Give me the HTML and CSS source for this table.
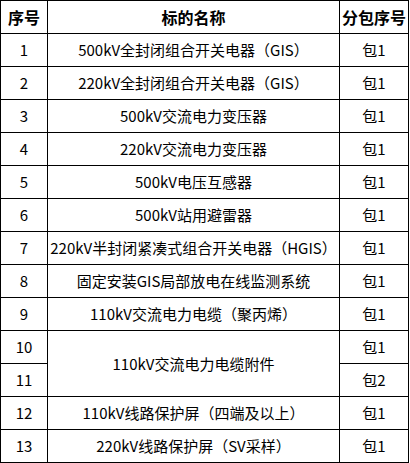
FILE: index.html
```html
<!DOCTYPE html>
<html lang="zh">
<head>
<meta charset="utf-8">
<link rel="stylesheet" href="styles.css">
</head>
<body>
<table class="bid-table">
  <colgroup>
    <col class="c-no">
    <col class="c-name">
    <col class="c-pkg">
  </colgroup>
  <thead>
    <tr><th>序号</th><th>标的名称</th><th>分包序号</th></tr>
  </thead>
  <tbody>
    <tr><td>1</td><td>500kV全封闭组合开关电器（GIS）</td><td>包1</td></tr>
    <tr><td>2</td><td>220kV全封闭组合开关电器（GIS）</td><td>包1</td></tr>
    <tr><td>3</td><td>500kV交流电力变压器</td><td>包1</td></tr>
    <tr><td>4</td><td>220kV交流电力变压器</td><td>包1</td></tr>
    <tr><td>5</td><td>500kV电压互感器</td><td>包1</td></tr>
    <tr><td>6</td><td>500kV站用避雷器</td><td>包1</td></tr>
    <tr><td>7</td><td>220kV半封闭紧凑式组合开关电器（HGIS）</td><td>包1</td></tr>
    <tr><td>8</td><td>固定安装GIS局部放电在线监测系统</td><td>包1</td></tr>
    <tr><td>9</td><td>110kV交流电力电缆（聚丙烯）</td><td>包1</td></tr>
    <tr><td>10</td><td rowspan="2">110kV交流电力电缆附件</td><td>包1</td></tr>
    <tr><td>11</td><td>包2</td></tr>
    <tr><td>12</td><td>110kV线路保护屏（四端及以上）</td><td>包1</td></tr>
    <tr><td>13</td><td>220kV线路保护屏（SV采样）</td><td>包1</td></tr>
  </tbody>
</table>
</body>
</html>
```
FILE: styles.css
```css
html, body {
  margin: 0;
  padding: 0;
  background: #ffffff;
}
body {
  font-family: "Noto Sans CJK SC", "Liberation Sans", sans-serif;
  color: #000000;
}
.bid-table {
  border-collapse: collapse;
  table-layout: fixed;
  width: 408px;
}
.c-no { width: 47px; }
.c-name { width: 292px; }
.c-pkg { width: 69px; }
.bid-table th,
.bid-table td {
  border: 1px solid #000000;
  padding: 0;
  height: 32px;
  text-align: center;
  vertical-align: middle;
  white-space: nowrap;
  line-height: 20px;
}
.bid-table th {
  font-size: 16px;
  font-weight: bold;
}
.bid-table td {
  font-size: 15px;
  font-weight: normal;
}
```
